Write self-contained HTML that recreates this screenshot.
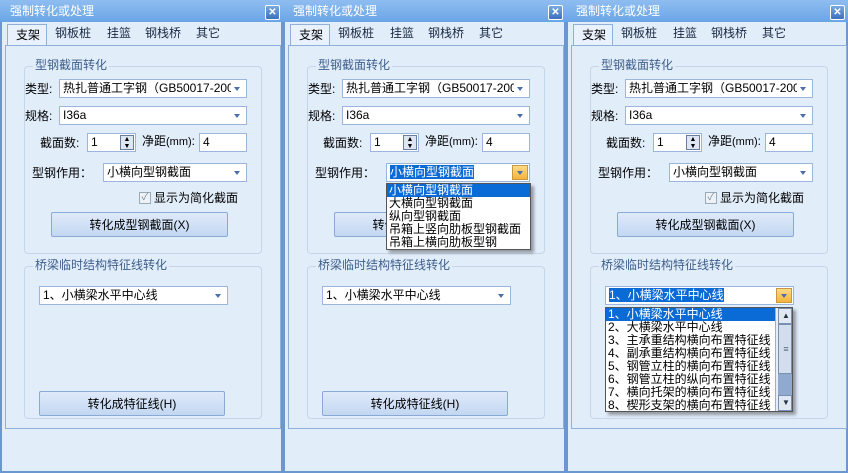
<!DOCTYPE html>
<html><head><meta charset="utf-8"><style>
*{margin:0;padding:0;box-sizing:border-box}
body{width:848px;height:473px;background:#fff;position:relative;overflow:hidden;font-family:"Liberation Sans","Noto Sans CJK SC",sans-serif;font-size:12px;color:#000}
.p{position:absolute;top:0;width:283px;height:473px;background:#e2edfa;border:2px solid #6b97d0;border-top:none}
.tb{position:absolute;left:-2px;right:-2px;top:0;height:22px;background:linear-gradient(#8fbdf0,#6aa5e6);color:#fff;font-size:12px;line-height:14px;padding:4px 0 0 10px}
.x{position:absolute;right:3px;top:5px;width:15px;height:15px;background:linear-gradient(#7aa8e0,#3d70c0);border:1px solid #fff;border-radius:2px;color:#fff;font-size:10px;font-weight:bold;text-align:center;line-height:13px}
.tabs{position:absolute;left:0;top:22px;width:279px;height:23px}
.tab{position:absolute;top:4px;font-size:12px;line-height:14px;color:#1a2b44}
.tact{position:absolute;left:5px;top:2px;width:40px;height:22px;background:#e8f1fc;border:1px solid #8fb0d8;border-bottom:none;font-size:12px;line-height:14px;padding:3px 0 0 8px}
.ca{position:absolute;left:3px;top:45px;width:276px;height:384px;border:1px solid #8fb0d8}
.g{position:absolute;border:1px solid #c6d6ea;border-radius:4px}
.gl{position:absolute;font-size:12px;line-height:14px;color:#3d5f8c;background:#e2edfa;padding:0 2px}
.l{position:absolute;font-size:12px;line-height:14px}
.cb{position:absolute;background:#fff;border:1px solid #9ab6dc;height:19px;font-size:12px;line-height:15px;padding:1px 0 0 3px;white-space:nowrap;overflow:hidden}
.cb .t{display:inline-block;overflow:hidden;vertical-align:top}
.cb .ar{position:absolute;right:6px;top:7px;width:0;height:0;border:3px solid transparent;border-top:4px solid #4d6fa8}
.btn{position:absolute;height:25px;border:1px solid #8aaad6;border-radius:2px;background:linear-gradient(#dfeafa,#c3d7f2);font-size:12px;line-height:14px;text-align:center;padding-top:5px}
.sel{background:#0a6ad6;color:#fff}
.dd{position:absolute;background:#fff;border:1px solid #555;box-shadow:3px 3px 3px rgba(0,0,0,.35);font-size:12px;line-height:13px}
.dd div{padding-left:2px;white-space:nowrap;height:13px;overflow:hidden}
.oa{position:absolute;right:1px;top:1px;width:16px;height:15px;background:linear-gradient(#fdd98a,#f5b43a);border:1px solid #c89a40}
.oa:after{content:"";position:absolute;left:4px;top:5px;border:3px solid transparent;border-top:4px solid #4d6fa8}
.sp{position:absolute;right:1px;top:1px;width:14px;height:15px;border:1px solid #6b7e99;background:#dde6f2;font-size:7px;line-height:7px;text-align:center}
.ck{position:absolute;left:137px;top:192px;width:12px;height:12px;border:1px solid #9ab;background:#eef2f7;font-size:10px;line-height:10px;color:#7a8a9c;text-align:center}
</style></head><body>

<div class="p" style="left:0">
 <div class="tb">强制转化或处理<div class="x">✕</div></div>
 <div class="tabs"><div class="tact">支架</div><span class="tab" style="left:53px">钢板桩</span><span class="tab" style="left:105px">挂篮</span><span class="tab" style="left:143px">钢栈桥</span><span class="tab" style="left:194px">其它</span></div>
 <div class="ca"></div>
 <div class="g" style="left:22px;top:66px;width:238px;height:188px"></div>
 <div class="gl" style="left:31px;top:58px">型钢截面转化</div>
 <div class="l" style="left:23px;top:82px">类型:</div>
 <div class="cb" style="left:57px;top:79px;width:188px"><span class="t" style="width:168px">热扎普通工字钢（GB50017-2003</span><span class="ar"></span></div>
 <div class="l" style="left:23px;top:109px">规格:</div>
 <div class="cb" style="left:57px;top:106px;width:188px">I36a<span class="ar"></span></div>
 <div class="l" style="left:38px;top:136px">截面数:</div>
 <div class="cb" style="left:85px;top:133px;width:49px">1<span class="sp">▲<br>▼</span></div>
 <div class="l" style="left:140px;top:134px">净距<span style="font-size:11px">(mm)</span>:</div>
 <div class="cb" style="left:197px;top:133px;width:48px">4</div>
 <div class="l" style="left:30px;top:166px">型钢作用：</div>
 <div class="cb" style="left:101px;top:163px;width:144px">小横向型钢截面<span class="ar"></span></div>
 <div class="ck">✓</div>
 <div class="l" style="left:152px;top:191px">显示为简化截面</div>
 <div class="btn" style="left:49px;top:212px;width:177px">转化成型钢截面(X)</div>
 <div class="g" style="left:22px;top:266px;width:238px;height:153px"></div>
 <div class="gl" style="left:31px;top:258px">桥梁临时结构特征线转化</div>
 <div class="cb" style="left:37px;top:286px;width:189px">1、小横梁水平中心线<span class="ar"></span></div>
 <div class="btn" style="left:37px;top:391px;width:186px">转化成特征线(H)</div>
</div>

<div class="p" style="left:283px">
 <div class="tb">强制转化或处理<div class="x">✕</div></div>
 <div class="tabs"><div class="tact">支架</div><span class="tab" style="left:53px">钢板桩</span><span class="tab" style="left:105px">挂篮</span><span class="tab" style="left:143px">钢栈桥</span><span class="tab" style="left:194px">其它</span></div>
 <div class="ca"></div>
 <div class="g" style="left:22px;top:66px;width:238px;height:188px"></div>
 <div class="gl" style="left:31px;top:58px">型钢截面转化</div>
 <div class="l" style="left:23px;top:82px">类型:</div>
 <div class="cb" style="left:57px;top:79px;width:188px"><span class="t" style="width:168px">热扎普通工字钢（GB50017-2003</span><span class="ar"></span></div>
 <div class="l" style="left:23px;top:109px">规格:</div>
 <div class="cb" style="left:57px;top:106px;width:188px">I36a<span class="ar"></span></div>
 <div class="l" style="left:38px;top:136px">截面数:</div>
 <div class="cb" style="left:85px;top:133px;width:49px">1<span class="sp">▲<br>▼</span></div>
 <div class="l" style="left:140px;top:134px">净距<span style="font-size:11px">(mm)</span>:</div>
 <div class="cb" style="left:197px;top:133px;width:48px">4</div>
 <div class="l" style="left:30px;top:166px">型钢作用：</div>
 <div class="cb" style="left:101px;top:163px;width:144px"><span class="sel">小横向型钢截面</span><span class="oa"></span></div>
 <div class="btn" style="left:49px;top:212px;width:177px">转化成型钢截面(X)</div>
 <div class="dd" style="left:101px;top:183px;width:145px;height:67px">
  <div class="sel">小横向型钢截面</div><div>大横向型钢截面</div><div>纵向型钢截面</div><div>吊箱上竖向肋板型钢截面</div><div>吊箱上横向肋板型钢</div>
 </div>
 <div class="g" style="left:22px;top:266px;width:238px;height:153px"></div>
 <div class="gl" style="left:31px;top:258px">桥梁临时结构特征线转化</div>
 <div class="cb" style="left:37px;top:286px;width:189px">1、小横梁水平中心线<span class="ar"></span></div>
 <div class="btn" style="left:37px;top:391px;width:186px">转化成特征线(H)</div>
</div>

<div class="p" style="left:566px;width:282px">
 <div class="tb">强制转化或处理<div class="x">✕</div></div>
 <div class="tabs"><div class="tact">支架</div><span class="tab" style="left:53px">钢板桩</span><span class="tab" style="left:105px">挂篮</span><span class="tab" style="left:143px">钢栈桥</span><span class="tab" style="left:194px">其它</span></div>
 <div class="ca"></div>
 <div class="g" style="left:22px;top:66px;width:238px;height:188px"></div>
 <div class="gl" style="left:31px;top:58px">型钢截面转化</div>
 <div class="l" style="left:23px;top:82px">类型:</div>
 <div class="cb" style="left:57px;top:79px;width:188px"><span class="t" style="width:168px">热扎普通工字钢（GB50017-2003</span><span class="ar"></span></div>
 <div class="l" style="left:23px;top:109px">规格:</div>
 <div class="cb" style="left:57px;top:106px;width:188px">I36a<span class="ar"></span></div>
 <div class="l" style="left:38px;top:136px">截面数:</div>
 <div class="cb" style="left:85px;top:133px;width:49px">1<span class="sp">▲<br>▼</span></div>
 <div class="l" style="left:140px;top:134px">净距<span style="font-size:11px">(mm)</span>:</div>
 <div class="cb" style="left:197px;top:133px;width:48px">4</div>
 <div class="l" style="left:30px;top:166px">型钢作用：</div>
 <div class="cb" style="left:101px;top:163px;width:144px">小横向型钢截面<span class="ar"></span></div>
 <div class="ck">✓</div>
 <div class="l" style="left:152px;top:191px">显示为简化截面</div>
 <div class="btn" style="left:49px;top:212px;width:177px">转化成型钢截面(X)</div>
 <div class="g" style="left:22px;top:266px;width:238px;height:153px"></div>
 <div class="gl" style="left:31px;top:258px">桥梁临时结构特征线转化</div>
 <div class="cb" style="left:37px;top:286px;width:189px"><span class="sel">1、小横梁水平中心线</span><span class="oa"></span></div>
 <div class="dd" style="left:37px;top:307px;width:188px;height:105px">
  <div class="sel" style="margin-right:17px">1、小横梁水平中心线</div><div>2、大横梁水平中心线</div><div>3、主承重结构横向布置特征线</div><div>4、副承重结构横向布置特征线</div><div>5、钢管立柱的横向布置特征线</div><div>6、钢管立柱的纵向布置特征线</div><div>7、横向托架的横向布置特征线</div><div>8、楔形支架的横向布置特征线</div>
  <div style="position:absolute;right:0;top:0;width:17px;height:103px;background:#e6edf6;border-left:1px solid #aab">
   <div style="height:16px;border:1px solid #7a90b0;background:#dfe8f4;font-size:8px;text-align:center;line-height:14px;color:#234">▲</div>
   <div style="height:50px;border:1px solid #7a90b0;background:#d2deee;font-size:9px;text-align:center;line-height:48px;color:#567">≡</div>
   <div style="height:21px;background:#8fa9cf"></div>
   <div style="height:16px;border:1px solid #7a90b0;background:#dfe8f4;font-size:8px;text-align:center;line-height:14px;color:#234">▼</div>
  </div>
 </div>
</div>
</body></html>
